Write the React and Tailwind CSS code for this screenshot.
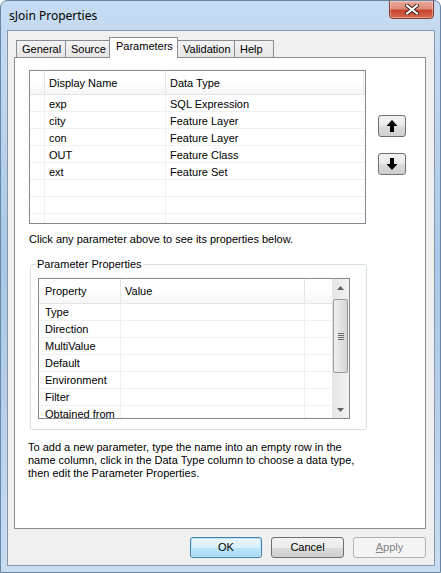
import React from "react";

function ArrowUp() {
  return (
    <svg width="12" height="14" viewBox="0 0 12 14">
      <path d="M6 1 L11.5 7 L8 7 L8 13 L4 13 L4 7 L0.5 7 Z" fill="#000" />
    </svg>
  );
}
function ArrowDown() {
  return (
    <svg width="12" height="14" viewBox="0 0 12 14">
      <path d="M6 13 L11.5 7 L8 7 L8 1 L4 1 L4 7 L0.5 7 Z" fill="#000" />
    </svg>
  );
}

function MoveButton({ children, className }) {
  return (
    <div
      className={
        "w-[28px] h-[22px] flex items-center justify-center rounded-[3px] border border-[#707070] bg-[linear-gradient(180deg,#f2f2f2_0%,#ebebeb_50%,#dddddd_51%,#cfcfcf_100%)] " +
        className
      }
    >
      {children}
    </div>
  );
}

export default function App() {
  const params = [
    ["exp", "SQL Expression"],
    ["city", "Feature Layer"],
    ["con", "Feature Layer"],
    ["OUT", "Feature Class"],
    ["ext", "Feature Set"],
    ["", ""],
    ["", ""],
    ["", ""],
  ];
  const props = ["Type", "Direction", "MultiValue", "Default", "Environment", "Filter", "Obtained from"];

  return (
    <div className="w-[441px] h-[573px] flex flex-col rounded-t-[7px] border border-[#6b86a3] bg-[linear-gradient(180deg,#c6dcf2_0%,#bcd5ee_20%,#a9c7e7_45%,#b5cfeb_70%,#c8ddf2_100%)] font-['Liberation_Sans',Arial,sans-serif] text-[11px] leading-[13px] text-black overflow-hidden">
      {/* Title bar */}
      <div className="h-[29px] flex items-start shrink-0">
        <span className="ml-[8px] mt-[8px] text-[12px] leading-[14px] font-['Noto_Sans','Liberation_Sans',sans-serif] text-[#000]">
          sJoin Properties
        </span>
        <div className="ml-auto mr-[6px] w-[45px] h-[19px] -mt-px flex items-center justify-center rounded-b-[4px] border border-[#8a3a2e] bg-[linear-gradient(180deg,#e9a99b_0%,#dd8c79_45%,#c7452e_55%,#d5694f_100%)] shadow-[inset_0_0_0_1px_rgba(255,255,255,0.35)]">
          <svg width="14" height="11" viewBox="0 0 14 11">
            <path d="M2 1.5 L12 9.5 M12 1.5 L2 9.5" stroke="#3c2320" strokeWidth="4" strokeLinecap="square" />
            <path d="M2 1.5 L12 9.5 M12 1.5 L2 9.5" stroke="#ffffff" strokeWidth="2" strokeLinecap="square" />
          </svg>
        </div>
      </div>

      {/* Client area */}
      <div className="ml-[6px] w-[428px] h-[536px] border border-[#8796a8] bg-[#f0f0f0] flex flex-col">
        {/* Tabs */}
        <div className="mt-[6px] ml-[8px] h-[21px] flex items-end relative z-10">
          <div className="w-[50px] h-[18px] border border-[#898c95] bg-[linear-gradient(180deg,#f3f3f3,#e6e6e6)] pl-[5px] pt-[2px]">General</div>
          <div className="w-[45px] h-[18px] -ml-px border border-[#898c95] bg-[linear-gradient(180deg,#f3f3f3,#e6e6e6)] pl-[5px] pt-[2px]">Source</div>
          <div className="w-[69px] h-[21px] -ml-px border border-b-0 border-[#898c95] bg-white pl-[6px] pt-[2px]">Parameters</div>
          <div className="w-[58px] h-[18px] -ml-px border border-[#898c95] bg-[linear-gradient(180deg,#f3f3f3,#e6e6e6)] pl-[5px] pt-[2px]">Validation</div>
          <div className="w-[40px] h-[18px] -ml-px border border-[#898c95] bg-[linear-gradient(180deg,#f3f3f3,#e6e6e6)] pl-[5px] pt-[2px]">Help</div>
        </div>

        {/* Panel */}
        <div className="ml-[6px] -mt-px w-[412px] h-[472px] border border-[#898c95] bg-white flex flex-col">
          {/* Parameters table + move buttons */}
          <div className="mt-[12px] ml-[14px] flex">
            <div className="w-[337px] h-[154px] border border-[#828790] bg-white flex flex-col overflow-hidden">
              <div className="h-[24px] shrink-0 flex border-b border-[#e5e5e5] bg-[linear-gradient(180deg,#ffffff_0%,#ffffff_50%,#f4f5f6_100%)]">
                <div className="w-[15px] border-r border-[#e5e5e5]" />
                <div className="w-[121px] border-r border-[#e5e5e5] pl-[4px] pt-[6px]">Display Name</div>
                <div className="w-[198px] border-r border-[#e5e5e5] pl-[4px] pt-[6px]">Data Type</div>
              </div>
              {params.map((r, i) => (
                <div key={i} className="h-[17px] shrink-0 flex border-b border-[#f0f0f0]">
                  <div className="w-[15px] border-r border-[#f0f0f0]" />
                  <div className="w-[121px] border-r border-[#f0f0f0] pl-[4px] pt-[3px]">{r[0]}</div>
                  <div className="w-[198px] pl-[4px] pt-[3px]">{r[1]}</div>
                </div>
              ))}
            </div>
            <div className="ml-[12px] flex flex-col">
              <MoveButton className="mt-[45px]">
                <ArrowUp />
              </MoveButton>
              <MoveButton className="mt-[16px]">
                <ArrowDown />
              </MoveButton>
            </div>
          </div>

          <div className="mt-[9px] ml-[14px]">Click any parameter above to see its properties below.</div>

          {/* Group box */}
          <div className="mt-[18px] ml-[15px] w-[337px] h-[166px] rounded-[3px] border border-[#d5dfe5] flex flex-col">
            <span className="-mt-[7px] ml-[5px] w-fit px-[1px] bg-white leading-[13px]">Parameter Properties</span>
            <div className="mt-[7px] ml-[7px] w-[312px] h-[141px] border border-[#828790] flex overflow-hidden">
              <div className="w-[293px] flex flex-col">
                <div className="h-[25px] shrink-0 flex border-b border-[#e5e5e5] bg-[linear-gradient(180deg,#ffffff_0%,#ffffff_50%,#f4f5f6_100%)]">
                  <div className="w-[82px] border-r border-[#e5e5e5] pl-[6px] pt-[6px]">Property</div>
                  <div className="w-[184px] border-r border-[#e5e5e5] pl-[4px] pt-[6px]">Value</div>
                  <div className="w-[27px]" />
                </div>
                {props.map((p, i) => (
                  <div key={i} className="h-[17px] shrink-0 flex border-b border-[#f0f0f0]">
                    <div className="w-[82px] border-r border-[#f0f0f0] pl-[6px] pt-[2px] whitespace-nowrap">{p}</div>
                    <div className="w-[184px] border-r border-[#f0f0f0]" />
                    <div className="w-[27px]" />
                  </div>
                ))}
              </div>
              {/* Scrollbar */}
              <div className="w-[17px] h-full flex flex-col items-center bg-[linear-gradient(90deg,#e6e6e6,#f2f2f2)]">
                <div className="h-[17px] w-full flex items-center justify-center">
                  <svg width="7" height="4" viewBox="0 0 7 4">
                    <path d="M0 4 L3.5 0 L7 4 Z" fill="#606060" />
                  </svg>
                </div>
                <div className="mt-[3px] w-[15px] h-[74px] rounded-[2px] border border-[#9a9a9a] bg-[linear-gradient(90deg,#f0f0f0,#e3e3e3_50%,#d6d6d6)] flex flex-col items-center justify-center gap-[1px]">
                  <div className="w-[6px] h-px bg-[#6a6a6a]" />
                  <div className="w-[6px] h-px bg-[#6a6a6a]" />
                  <div className="w-[6px] h-px bg-[#6a6a6a]" />
                  <div className="w-[6px] h-px bg-[#6a6a6a]" />
                </div>
                <div className="mt-auto h-[17px] w-full flex items-center justify-center">
                  <svg width="7" height="4" viewBox="0 0 7 4">
                    <path d="M0 0 L3.5 4 L7 0 Z" fill="#606060" />
                  </svg>
                </div>
              </div>
            </div>
          </div>

          <div className="mt-[11px] ml-[13px] leading-[13px]">
            To add a new parameter, type the name into an empty row in the
            <br />
            name column, click in the Data Type column to choose a data type,
            <br />
            then edit the Parameter Properties.
          </div>
        </div>

        {/* Buttons */}
        <div className="mt-[8px] flex ml-[182px] gap-[9px]">
          <div className="w-[72px] h-[21px] rounded-[3px] border border-[#3c7fb1] bg-[linear-gradient(180deg,#eaf6fd_0%,#d9f0fc_50%,#bee6fd_51%,#a7d9f5_100%)] shadow-[inset_0_0_0_1px_#c5e6fa] flex items-center justify-center">
            OK
          </div>
          <div className="w-[73px] h-[21px] rounded-[3px] border border-[#707070] bg-[linear-gradient(180deg,#f2f2f2_0%,#ebebeb_50%,#dddddd_51%,#cfcfcf_100%)] flex items-center justify-center">
            Cancel
          </div>
          <div className="w-[73px] h-[21px] rounded-[3px] border border-[#adb2b5] bg-[#f4f4f4] text-[#838383] flex items-center justify-center">
            <span>
              <span className="underline">A</span>pply
            </span>
          </div>
        </div>
      </div>
    </div>
  );
}
